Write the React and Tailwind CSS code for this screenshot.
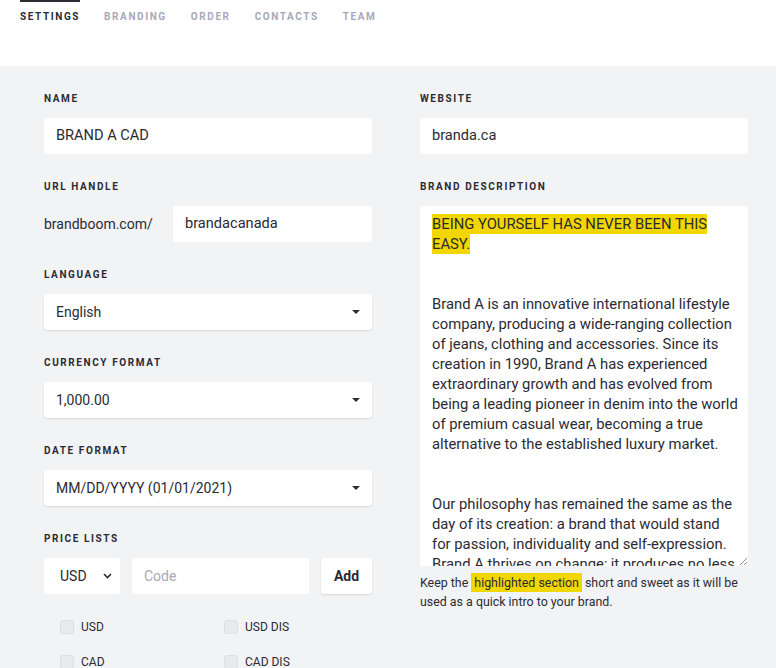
import React from "react";

const font = { fontFamily: '"Roboto", "Liberation Sans", sans-serif' };

function Label({ children }) {
  return (
    <div className="text-[10px] font-bold tracking-[0.16em] text-[#2b2b33] leading-[12px] h-[13px] pt-[1px] mb-[13px]">
      {children}
    </div>
  );
}

function Caret() {
  return (
    <svg width="8" height="4" viewBox="0 0 8 4" className="shrink-0">
      <path d="M0 0 L8 0 L4 4 Z" fill="#2b2b33" />
    </svg>
  );
}

function Select({ value }) {
  return (
    <div className="h-[36px] bg-white rounded-[3px] shadow-[0_1px_2px_rgba(0,0,0,0.12)] flex items-center justify-between pl-[12px] pr-[12px] text-[14px] text-[#2b2b33]">
      <span>{value}</span>
      <Caret />
    </div>
  );
}

function Input({ value, className = "" }) {
  return (
    <div className={"h-[36px] bg-white rounded-[3px] flex items-center px-[12px] text-[14.6px] text-[#2b2b33] " + className}>
      {value}
    </div>
  );
}

function Check({ label }) {
  return (
    <div className="flex items-center gap-[7px] h-[14px]">
      <div className="w-[14px] h-[14px] rounded-[3px] bg-[#e8eaed] border border-[#dcdfe3]" />
      <span className="text-[12px] text-[#2b2b33]">{label}</span>
    </div>
  );
}

const lines1 = [
  "Brand A is an innovative international lifestyle",
  "company, producing a wide-ranging collection",
  "of jeans, clothing and accessories. Since its",
  "creation in 1990, Brand A has experienced",
  "extraordinary growth and has evolved from",
  "being a leading pioneer in denim into the world",
  "of premium casual wear, becoming a true",
  "alternative to the established luxury market.",
];
const lines2 = [
  "Our philosophy has remained the same as the",
  "day of its creation: a brand that would stand",
  "for passion, individuality and self-expression.",
  "Brand A thrives on change; it produces no less",
];

export default function App() {
  return (
    <div className="w-[776px] h-[668px] overflow-hidden bg-[#f2f3f5]" style={font}>
      <div className="h-[66px] bg-white flex gap-[24px] px-[20px]">
        {["SETTINGS", "BRANDING", "ORDER", "CONTACTS", "TEAM"].map((t, i) => (
          <div
            key={t}
            className={
              "pt-[9px] h-[66px] text-[10px] font-bold tracking-[0.16em] leading-[12px] border-t-[2px] " +
              (i === 0 ? "border-[#2b2b33] text-[#2b2b33]" : "border-transparent text-[#a9a8b8]")
            }
          >
            {t}
          </div>
        ))}
      </div>
      <div className="flex gap-[48px] pl-[44px] pt-[26px]">
        <div className="w-[328px] flex flex-col">
          <Label>NAME</Label>
          <Input value="BRAND A CAD" />
          <div className="h-[26px]" />
          <Label>URL HANDLE</Label>
          <div className="flex items-center">
            <span className="w-[129px] text-[14px] text-[#2b2b33]">brandboom.com/</span>
            <Input value="brandacanada" className="flex-1" />
          </div>
          <div className="h-[26px]" />
          <Label>LANGUAGE</Label>
          <Select value="English" />
          <div className="h-[26px]" />
          <Label>CURRENCY FORMAT</Label>
          <Select value="1,000.00" />
          <div className="h-[26px]" />
          <Label>DATE FORMAT</Label>
          <Select value="MM/DD/YYYY (01/01/2021)" />
          <div className="h-[26px]" />
          <Label>PRICE LISTS</Label>
          <div className="flex gap-[12px]">
            <div className="w-[76px] h-[36px] bg-white rounded-[3px] flex items-center justify-between pl-[16px] pr-[8px] text-[14px] text-[#2b2b33]">
              <span>USD</span>
              <svg width="9" height="6" viewBox="0 0 9 6">
                <path d="M1 1 L4.5 4.5 L8 1" fill="none" stroke="#2b2b33" strokeWidth="1.6" />
              </svg>
            </div>
            <div className="w-[177px] h-[36px] bg-white rounded-[3px] flex items-center px-[12px] text-[14px] text-[#a9a8b8]">
              Code
            </div>
            <div className="w-[51px] h-[36px] bg-white rounded-[3px] shadow-[0_1px_2px_rgba(0,0,0,0.12)] flex items-center justify-center text-[14px] font-bold text-[#2b2b33]">
              Add
            </div>
          </div>
          <div className="grid grid-cols-[164px_1fr] pl-[16px] pt-[26px] gap-y-[21px]">
            <Check label="USD" />
            <Check label="USD DIS" />
            <Check label="CAD" />
            <Check label="CAD DIS" />
          </div>
        </div>
        <div className="w-[328px] flex flex-col">
          <Label>WEBSITE</Label>
          <Input value="branda.ca" />
          <div className="h-[26px]" />
          <Label>BRAND DESCRIPTION</Label>
          <div className="relative h-[360px] bg-white rounded-[3px] overflow-hidden px-[12px] pt-[8px] text-[14.8px] leading-[20px] text-[#2b2b33] whitespace-nowrap">
            <div>
              <span className="bg-[#f2d600] py-[1px]">BEING YOURSELF HAS NEVER BEEN THIS </span>
            </div>
            <div>
              <span className="bg-[#f2d600] py-[1px]">EASY.</span>
            </div>
            <div className="h-[20px]" />
            <div className="h-[20px]" />
            {lines1.map((l) => (
              <div key={l}>{l}</div>
            ))}
            <div className="h-[20px]" />
            <div className="h-[20px]" />
            {lines2.map((l) => (
              <div key={l}>{l}</div>
            ))}
            <svg width="8" height="8" viewBox="0 0 8 8" className="absolute right-[1px] bottom-[1px]">
              <path d="M8 1 L1 8 M8 5 L5 8" stroke="#8a8a8a" strokeWidth="1" />
            </svg>
          </div>
          <div className="mt-[7px] text-[12.4px] leading-[19px] text-[#2b2b33]">
            Keep the <span className="bg-[#f2d600] px-[3px] py-[2px]">highlighted section</span> short and sweet as it will be
            <br />
            used as a quick intro to your brand.
          </div>
        </div>
      </div>
    </div>
  );
}
